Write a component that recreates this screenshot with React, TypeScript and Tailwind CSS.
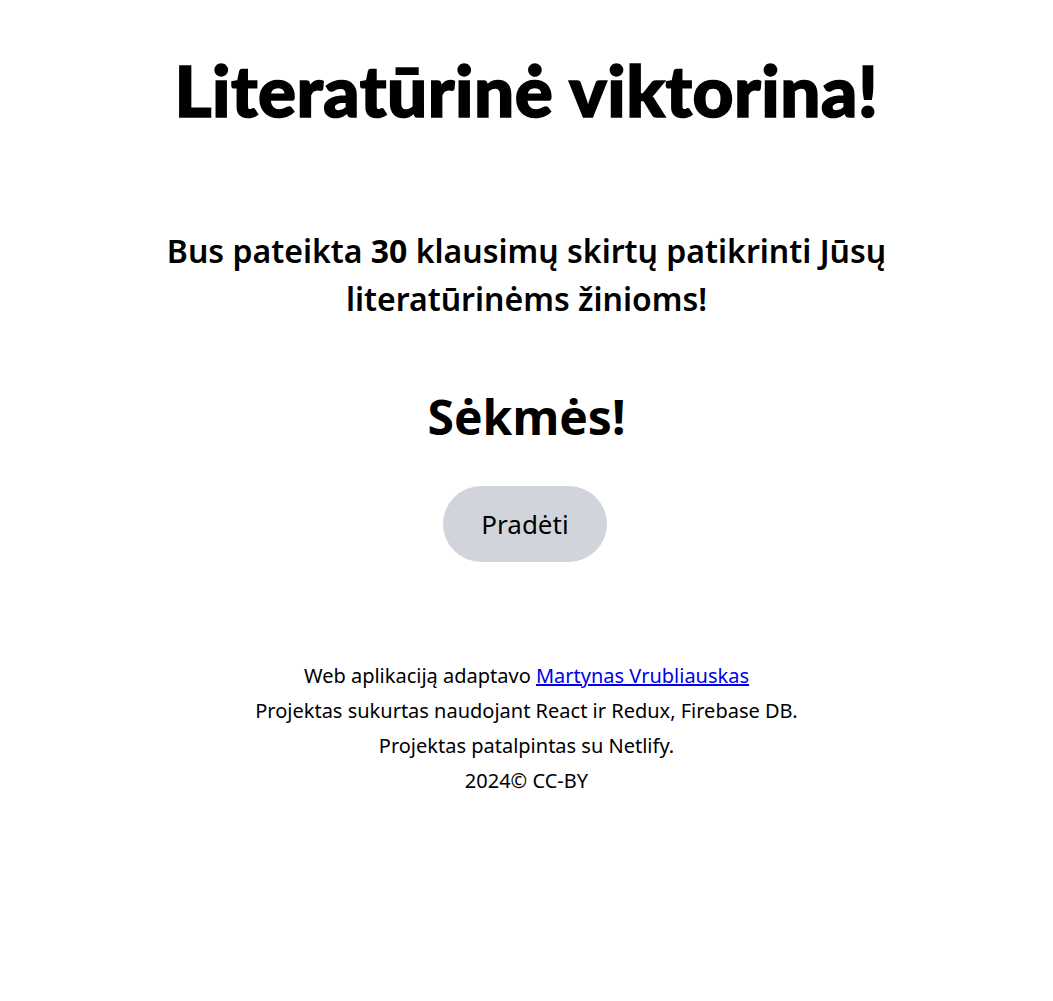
import React from "react";

export default function App() {
  return (
    <div className="min-h-screen bg-white text-black flex flex-col items-center font-['Noto_Sans','Open_Sans',sans-serif]">
      <h1 className="mt-[54px] text-[71px] leading-[72px] tracking-[0.5px] font-black font-['Lato','Noto_Sans',sans-serif] [-webkit-text-stroke:1.6px_black]">
        Literatūrinė viktorina!
      </h1>
      <p className="mt-[101px] w-[760px] text-center text-[32px] leading-[48px] font-semibold">
        Bus pateikta <span className="font-bold">30</span> klausimų skirtų patikrinti Jūsų
        <br />
        literatūrinėms žinioms!
      </p>
      <h2 className="mt-[67px] text-[48px] leading-[53px] font-bold">Sėkmės!</h2>
      <button className="mt-[43px] mr-[3px] w-[164px] h-[76px] rounded-full bg-[#d1d5db] text-[26px] text-black">
        Pradėti
      </button>
      <footer className="mt-[96px] text-center text-[20px] leading-[35px]">
        <div>
          Web aplikaciją adaptavo{" "}
          <a href="#" className="text-[#0000ee] underline">
            Martynas Vrubliauskas
          </a>
        </div>
        <div>Projektas sukurtas naudojant React ir Redux, Firebase DB.</div>
        <div>Projektas patalpintas su Netlify.</div>
        <div>2024© CC-BY</div>
      </footer>
    </div>
  );
}
